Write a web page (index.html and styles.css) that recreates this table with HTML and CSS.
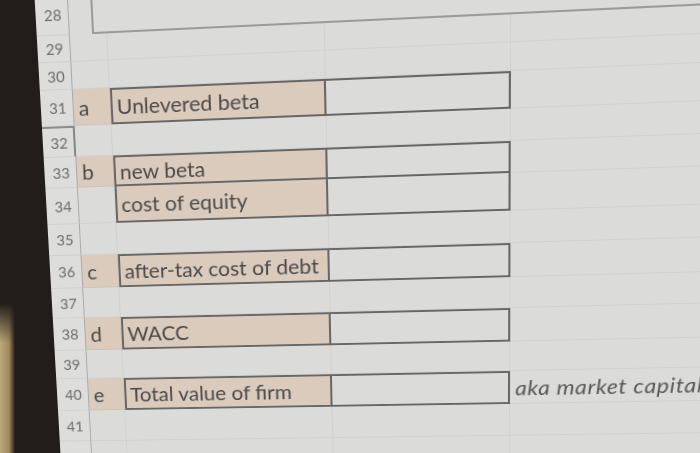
FILE: index.html
```html
<!DOCTYPE html>
<html>
<head>
<meta charset="utf-8">
<link rel="stylesheet" href="styles.css">
</head>
<body>
<div class="screen">
  <div class="bezel"></div>
  <div class="sheet">
    <div class="row h28"><div class="hdr">28</div><div class="gap"></div><div class="topbox"></div></div>
    <div class="row h29"><div class="hdr">29</div><div class="ca"></div><div class="cb"></div><div class="cc"></div><div class="rest"></div></div>
    <div class="row h30"><div class="hdr">30</div><div class="ca"></div><div class="cb"></div><div class="cc"></div><div class="rest"></div></div>
    <div class="row h31"><div class="hdr">31</div><div class="ca fill">a</div><div class="cb fill box">Unlevered beta</div><div class="cc box">&nbsp;</div><div class="rest"></div></div>
    <div class="row h32"><div class="hdr sel">32</div><div class="ca"></div><div class="cb"></div><div class="cc"></div><div class="rest"></div></div>
    <div class="row h33"><div class="hdr">33</div><div class="ca fill">b</div><div class="cb fill box">new beta</div><div class="cc box">&nbsp;</div><div class="rest"></div></div>
    <div class="row h34"><div class="hdr">34</div><div class="ca"></div><div class="cb fill box nt">cost of equity</div><div class="cc box nt">&nbsp;</div><div class="rest"></div></div>
    <div class="row h35"><div class="hdr">35</div><div class="ca"></div><div class="cb"></div><div class="cc"></div><div class="rest"></div></div>
    <div class="row h36"><div class="hdr">36</div><div class="ca fill">c</div><div class="cb fill box">after-tax cost of debt</div><div class="cc box">&nbsp;</div><div class="rest"></div></div>
    <div class="row h37"><div class="hdr">37</div><div class="ca"></div><div class="cb"></div><div class="cc"></div><div class="rest"></div></div>
    <div class="row h38"><div class="hdr">38</div><div class="ca fill">d</div><div class="cb fill box">WACC</div><div class="cc box">&nbsp;</div><div class="rest"></div></div>
    <div class="row h39"><div class="hdr">39</div><div class="ca"></div><div class="cb"></div><div class="cc"></div><div class="rest"></div></div>
    <div class="row h40"><div class="hdr">40</div><div class="ca fill">e</div><div class="cb fill box">Total value of firm</div><div class="cc box">&nbsp;</div><div class="rest note">aka market capitalization</div></div>
    <div class="row h41"><div class="hdr">41</div><div class="ca"></div><div class="cb"></div><div class="cc"></div><div class="rest"></div></div>
    <div class="row h42"><div class="hdr"></div><div class="ca"></div><div class="cb"></div><div class="cc"></div><div class="rest"></div></div>
  </div>
</div>
</body>
</html>
```
FILE: styles.css
```css
html, body {
  margin: 0;
  width: 700px;
  height: 453px;
  overflow: hidden;
}
body {
  background-color: #221d1a;
  background-image: linear-gradient(to bottom, rgba(34,29,26,1) 0, rgba(34,29,26,0) 40px),
                    linear-gradient(to right, #bca878 0, #a08a5e 9px, #221d1a 15px);
  background-size: 100% 150px, 100% 150px;
  background-position: 0 303px, 0 303px;
  background-repeat: no-repeat;
  font-family: Lato, "Open Sans", sans-serif;
}
.screen {
  display: flex;
  width: 800px;
  height: 520px;
  transform-origin: 0 0;
  transform: matrix3d(0.998824, -0.050055, 0, -0.000083634, 0.061222, 1.000489, 0, 0.000125635, 0, 0, 1, 0, -2.2271, 4.5216, 0, 1);
}
.bezel {
  width: 37px;
  flex: none;
  background: #221d1a;
}
.sheet {
  flex: 1;
  margin-top: -8px;
  background: #dbdcda;
  display: flex;
  flex-direction: column;
}
.row {
  display: flex;
  flex: none;
}
.h28 { height: 42px; }
.h29 { height: 27px; }
.h30 { height: 28px; }
.h31 { height: 37px; }
.h32 { height: 32px; }
.h33 { height: 32px; }
.h34 { height: 38px; }
.h35 { height: 33px; }
.h36 { height: 35px; }
.h37 { height: 32px; }
.h38 { height: 35px; }
.h39 { height: 31px; }
.h40 { height: 35px; }
.h41 { height: 34px; }
.h42 { height: 34px; }

.row > div {
  box-sizing: border-box;
  display: flex;
  align-items: center;
  white-space: nowrap;
}
.hdr {
  width: 33px;
  flex: none;
  justify-content: center;
  padding-left: 2px;
  font-size: 15px;
  color: #6d6d6b;
  background: #dddddb;
  border-right: 1px solid #a9aaa8;
  border-bottom: 1px solid #d0d1cf;
}
.hdr.sel {
  border-top: 2px solid #8c8c8a;
  border-right: 2px solid #858583;
}
.gap {
  width: 22px;
  flex: none;
}
.topbox {
  flex: 1;
  border-left: 2px solid #9a9a98;
  border-bottom: 2px solid #9a9a98;
}
.ca, .cb, .cc, .rest {
  border-right: 1px solid rgba(0,0,0,0.045);
  border-bottom: 1px solid rgba(0,0,0,0.045);
  color: #4b4a49;
  font-size: 21px;
}
.ca {
  width: 37px;
  flex: none;
  padding-left: 5px;
}
.cb {
  width: 211px;
  flex: none;
  padding-left: 4px;
}
.cc {
  width: 175px;
  flex: none;
}
.rest {
  flex: 1;
}
.fill {
  background: #dacbbc;
}
.cb.box {
  border: 2px solid #686766;
  padding-left: 4px;
}
.cc.box {
  border: 2px solid #686766;
  border-left: none;
}
.box.nt {
  border-top: none;
}
.note {
  font-style: italic;
  font-size: 22px;
  letter-spacing: 0.6px;
  padding-left: 5px;
  color: #5a5a5a;
}
```
